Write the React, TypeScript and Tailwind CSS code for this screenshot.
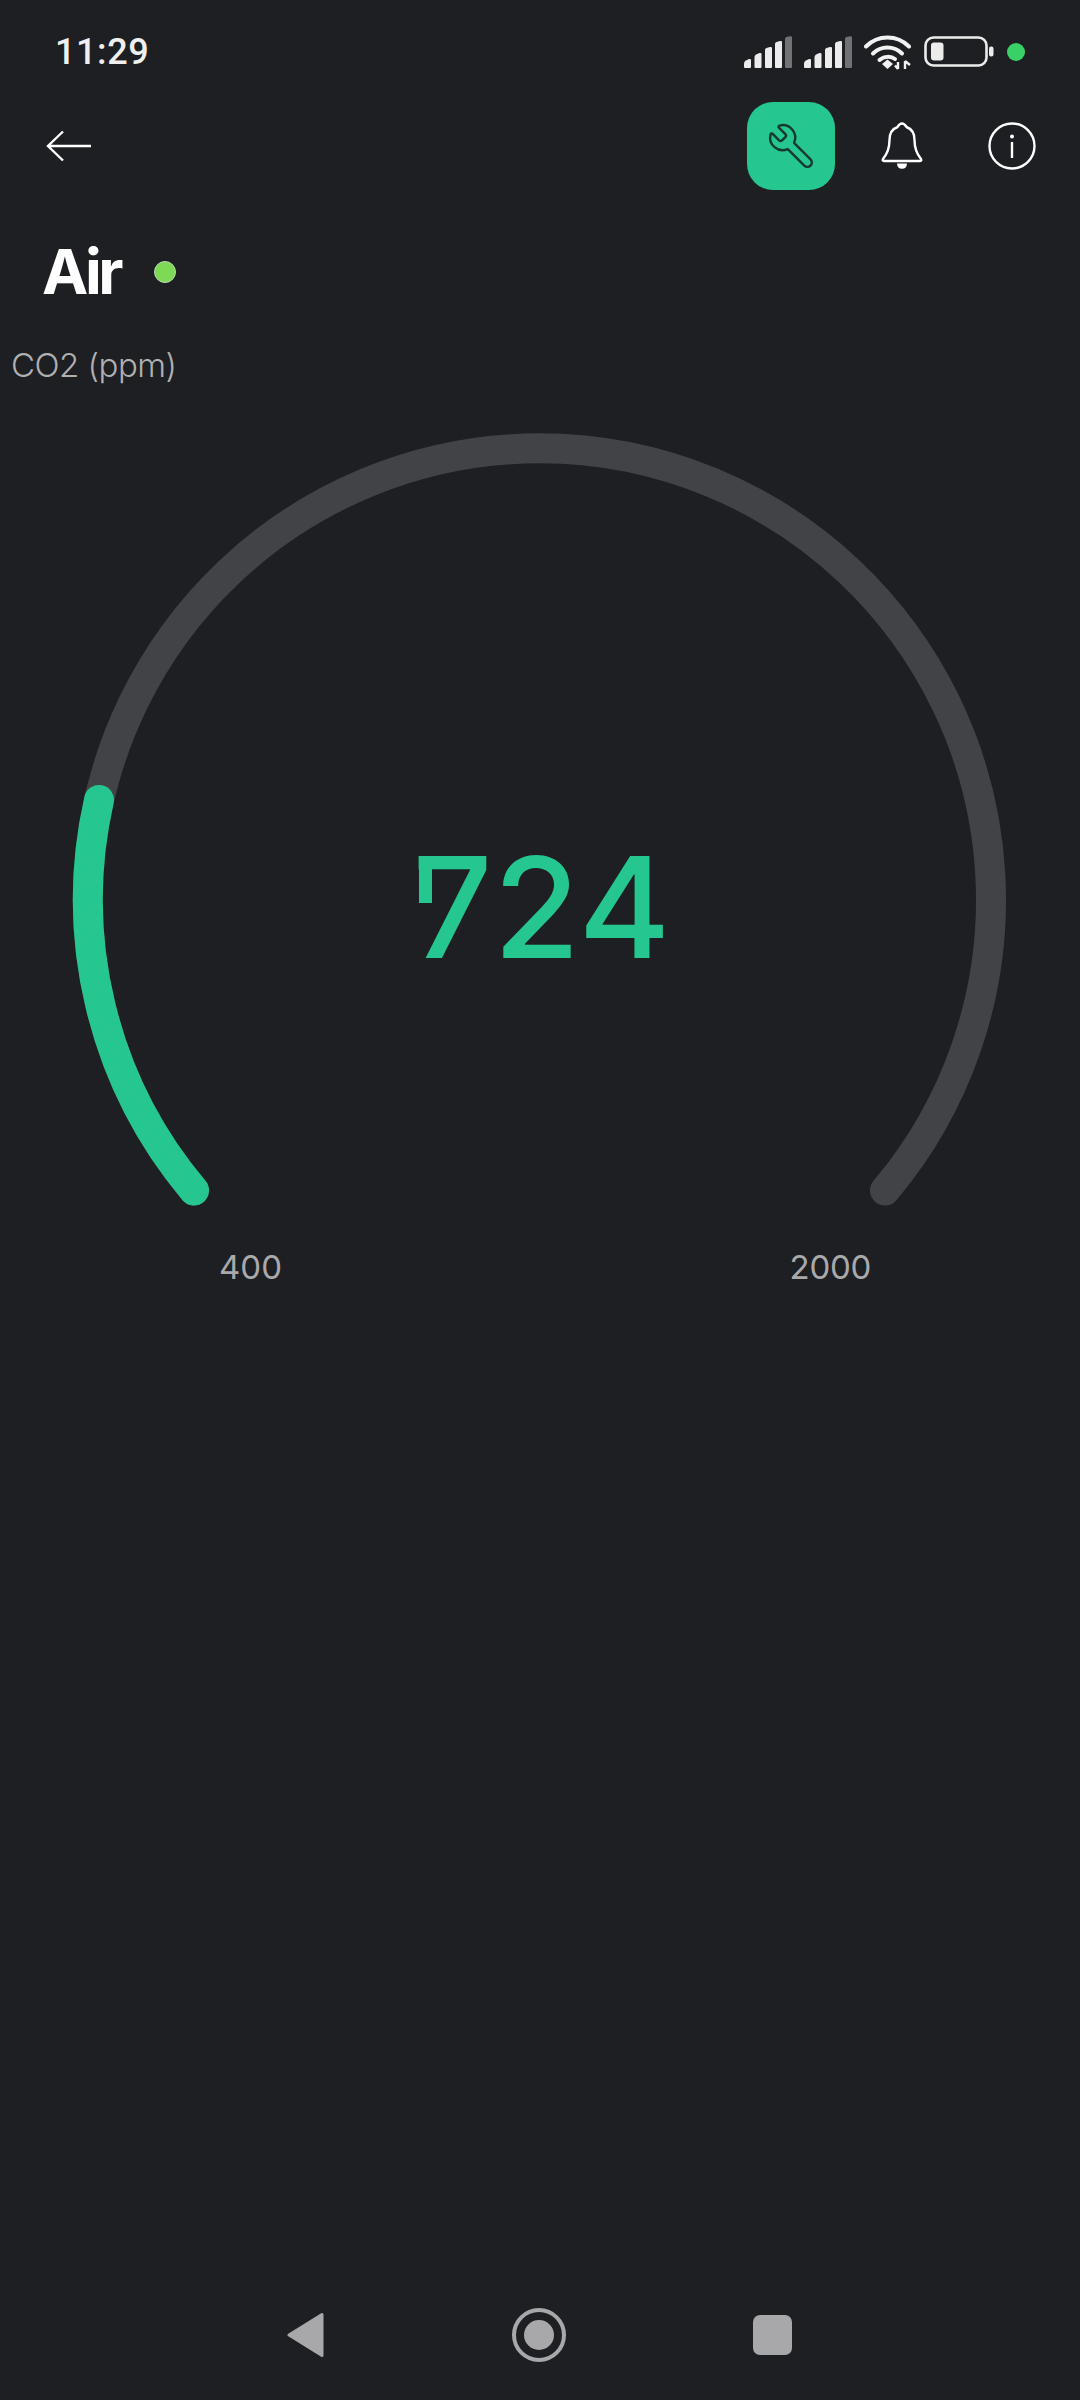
import React from 'react';
import { Wrench } from 'lucide-react';

const SignalIcon = () => (
  <svg width="48" height="32" viewBox="0 0 48 32" className="block">
    <path d="M0 27.5 Q0 25.5 2 24.5 L5 23 Q7 22.5 7 24 V31 Q7 32 6 32 H1 Q0 32 0 31 Z" fill="#ececec" />
    <path d="M10.5 21 Q10.5 19.5 12 18.5 L15.5 17 Q17.5 16.5 17.5 18 V31 Q17.5 32 16.5 32 H11.5 Q10.5 32 10.5 31 Z" fill="#ececec" />
    <path d="M21 14 Q21 12.5 22.5 12 L26 11 Q28 10.5 28 12 V31 Q28 32 27 32 H22 Q21 32 21 31 Z" fill="#ececec" />
    <path d="M31 8 Q31 6.5 32.5 6 L36 5 Q38 4.5 38 6 V31 Q38 32 37 32 H32 Q31 32 31 31 Z" fill="#ececec" />
    <path d="M41 3 Q41 1.5 42.5 1 L46 0.2 Q48 0 48 1.5 V31 Q48 32 47 32 H42 Q41 32 41 31 Z" fill="#727274" />
  </svg>
);

const WifiIcon = () => (
  <svg width="48" height="36" viewBox="0 0 48 36" fill="none" className="block">
    <path d="M2 12.5 C14 0.5 33 0.5 45 12.5" stroke="#f2f2f2" strokeWidth="4" strokeLinecap="round" />
    <path d="M9 19.5 C17 11.5 30 11.5 38 19.5" stroke="#f2f2f2" strokeWidth="4" strokeLinecap="round" />
    <path d="M15.5 26 C20 22 27 22 31 25" stroke="#f2f2f2" strokeWidth="4" strokeLinecap="round" />
    <path d="M18 30 L23.5 25.5 L29 30 L23.5 35 Z" fill="#f2f2f2" />
    <path d="M34 28 V35 M31 31.5 L34 35 M41 35 V27 M41 27 L46 31" stroke="#f2f2f2" strokeWidth="2.4" />
  </svg>
);

const BatteryIcon = () => (
  <svg width="70" height="32" viewBox="0 0 70 32" fill="none" className="block">
    <rect x="1.5" y="1.5" width="61" height="28" rx="8" stroke="#ececec" strokeWidth="2.6" />
    <rect x="7" y="6.5" width="12.5" height="18" rx="3" fill="#ececec" />
    <rect x="65" y="10.5" width="4.5" height="10" rx="2" fill="#ececec" />
  </svg>
);

const BellIcon = () => (
  <svg width="42" height="48" viewBox="0 0 42 48" fill="none" className="block">
    <path
      d="M21 1.5 C23.5 1.5 24.5 3.5 25.5 5 C31 7 33.5 11.5 33.5 18 C33.5 26 35 31 40 37 Q41 39 39 39 H3 Q1 39 2 37 C7 31 8.5 26 8.5 18 C8.5 11.5 11 7 16.5 5 C17.5 3.5 18.5 1.5 21 1.5 Z"
      stroke="#fff"
      strokeWidth="2.4"
      strokeLinejoin="round"
    />
    <path d="M16 41.5 H26 C26 45 24 46.8 21 46.8 C18 46.8 16 45 16 41.5 Z" fill="#fff" />
  </svg>
);

const InfoIcon = () => (
  <svg width="48" height="48" viewBox="0 0 48 48" fill="none" className="block">
    <circle cx="24" cy="24" r="22.5" stroke="#fff" strokeWidth="2.4" />
    <circle cx="24" cy="14.5" r="2" fill="#fff" />
    <path d="M24 20 V36" stroke="#fff" strokeWidth="2.4" />
  </svg>
);

const BackArrow = () => (
  <svg width="46" height="32" viewBox="0 0 46 32" fill="none" className="block">
    <path d="M45 16 H2 M17 1.5 L2 16 L17 30.5" stroke="#fff" strokeWidth="2.4" />
  </svg>
);

// Gauge geometry in svg units, center is (539.5, 499)
const Gauge = () => (
  <div className="relative w-[1080px] h-[820px]">
    <svg width="1080" height="820" viewBox="0 0 1080 820" fill="none" className="block">
      <path
        d="M194 790.5 A451.5 451.5 0 1 1 885 790.5"
        stroke="#424347"
        strokeWidth="30"
        strokeLinecap="round"
      />
      <path
        d="M194 790.5 A451.5 451.5 0 0 1 99 400"
        stroke="#25c68f"
        strokeWidth="30"
        strokeLinecap="round"
      />
    </svg>
    <div className="absolute inset-0 flex items-center justify-center pl-[4px] pt-[194px]">
      <span className="relative text-[#25c68f] text-[140px] leading-none tracking-[1px] font-[450] font-['Inter',sans-serif]">
        724
        {/* the 7 in the reference has a small down tick on its left end */}
        <span className="absolute left-[6px] top-[29px] w-[13px] h-[37px] bg-[#25c68f]" />
      </span>
    </div>
  </div>
);

export default function App() {
  return (
    <div className="w-[1080px] h-[2400px] bg-[#1d1f23] flex flex-col font-['Inter',sans-serif]">
      {/* Status bar */}
      <div className="h-[102px] flex items-center justify-between pl-[55px] pr-[55px] pt-[2px]">
        <span className="text-[36px] leading-none font-medium tracking-[0.6px] text-[#efefef] font-['Roboto',sans-serif]">
          11:29
        </span>
        <div className="flex items-center">
          <div className="flex items-center gap-[12px]">
            <SignalIcon />
            <SignalIcon />
          </div>
          <div className="ml-[12px]">
            <WifiIcon />
          </div>
          <div className="ml-[12px]">
            <BatteryIcon />
          </div>
          <div className="ml-[13px] w-[18px] h-[18px] rounded-full bg-[#3ad068]" />
        </div>
      </div>

      {/* Toolbar */}
      <div className="h-[88px] flex items-center justify-between pl-[46px] pr-[44px]">
        <BackArrow />
        <div className="flex items-center">
          <div className="w-[88px] h-[88px] rounded-[26px] bg-[#25c68f] flex items-center justify-center">
            <Wrench size={50} strokeWidth={1.15} color="#163a32" className="-scale-x-100" />
          </div>
          <div className="ml-[46px]">
            <BellIcon />
          </div>
          <div className="ml-[65px]">
            <InfoIcon />
          </div>
        </div>
      </div>

      {/* Title */}
      <div className="mt-[50px] h-[64px] flex items-center pl-[42px]">
        <span className="text-[62px] leading-none font-bold tracking-[-3.5px] text-white">Air</span>
        <div className="ml-[34px] w-[22px] h-[22px] rounded-full bg-[#7ed957] border border-[#b9e0a6]" />
      </div>

      {/* Label */}
      <div className="mt-[41px] h-[40px] flex items-center pl-[11px]">
        <span className="text-[33px] leading-none font-light tracking-[-0.5px] text-[#b0b0b2]">CO2 (ppm)</span>
      </div>

      <div className="mt-[15px]">
        <Gauge />
      </div>

      {/* Min / max */}
      <div className="mt-[27px] flex justify-between pl-[219px] pr-[209px]">
        <span className="text-[33px] leading-[40px] font-normal text-[#a9a9ab]">400</span>
        <span className="text-[33px] leading-[40px] font-normal tracking-[-0.3px] text-[#a9a9ab]">2000</span>
      </div>

      {/* Android nav bar */}
      <div className="mt-auto pb-[38px] pl-[287px] flex items-center">
        <svg width="37" height="46" viewBox="0 0 37 46" className="block">
          <path
            d="M35 2.5 V43.5 L2 23 Z"
            fill="#a8a8aa"
            stroke="#a8a8aa"
            strokeWidth="3"
            strokeLinejoin="round"
          />
        </svg>
        <div className="ml-[188px] w-[54px] h-[54px] rounded-full border-[4px] border-[#a8a8aa] flex items-center justify-center">
          <div className="w-[30px] h-[30px] rounded-full bg-[#a8a8aa]" />
        </div>
        <div className="ml-[187px] w-[39px] h-[40px] rounded-[7px] bg-[#a8a8aa]" />
      </div>
    </div>
  );
}
